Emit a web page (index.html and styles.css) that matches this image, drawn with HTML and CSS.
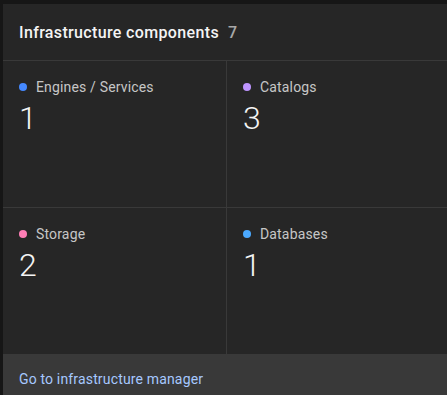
FILE: index.html
```html
<!DOCTYPE html>
<html>
<head>
  <title>Infrastructure components</title>
  <meta name="viewport" content="width=device-width, initial-scale=1.0">
  <link rel="stylesheet" href="styles.css">
</head>
<body>
  <div class="card">
    <div class="card-header">
      <h2 class="card-title">Infrastructure components</h2>
      <span class="card-count">7</span>
    </div>
    <div class="tiles">
      <div class="tile">
        <div class="tile-label"><span class="dot dot-engines"></span>Engines / Services</div>
        <div class="tile-value">1</div>
      </div>
      <div class="tile">
        <div class="tile-label"><span class="dot dot-catalogs"></span>Catalogs</div>
        <div class="tile-value">3</div>
      </div>
      <div class="tile">
        <div class="tile-label"><span class="dot dot-storage"></span>Storage</div>
        <div class="tile-value">2</div>
      </div>
      <div class="tile">
        <div class="tile-label"><span class="dot dot-databases"></span>Databases</div>
        <div class="tile-value">1</div>
      </div>
    </div>
    <div class="card-footer">
      <a class="footer-link" href="#">Go to infrastructure manager</a>
    </div>
  </div>
</body>
</html>
```

FILE: styles.css
```css
html, body {
  height: 100%;
}

body {
  margin: 0;
  padding: 4px 0 0 3px;
  background-color: #161616;
  font-family: Roboto, 'Noto Sans', sans-serif;
  color: #f4f4f4;
  overflow: hidden;
  box-sizing: border-box;
}

.card {
  width: 447px;
  height: 100%;
  background-color: #262626;
  display: flex;
  flex-direction: column;
}

.card-header {
  flex-shrink: 0;
  display: flex;
  align-items: center;
  gap: 9px;
  height: 56px;
  padding: 0 16px;
  border-bottom: 1px solid #393939;
}

.card-title {
  margin: 0;
  font-size: 16px;
  font-weight: 500;
  letter-spacing: 0.35px;
  color: #f4f4f4;
}

.card-count {
  font-size: 16px;
  font-weight: 500;
  color: #a8a8a8;
}

.tiles {
  flex-shrink: 0;
  display: grid;
  grid-template-columns: 223px 1fr;
  grid-auto-rows: 146px;
  gap: 1px;
  background-color: #393939;
}

.tile {
  background-color: #262626;
  padding: 16px;
}

.tile-label {
  display: flex;
  align-items: center;
  gap: 9px;
  font-size: 14px;
  line-height: 20px;
  color: #c6c6c6;
  letter-spacing: 0.16px;
}

.dot {
  width: 8px;
  height: 8px;
  border-radius: 50%;
}

.dot-engines { background-color: #4589ff; }
.dot-catalogs { background-color: #be95ff; }
.dot-storage { background-color: #ff7eb6; }
.dot-databases { background-color: #4ba9ff; }

.tile-value {
  margin-top: 3px;
  font-size: 32px;
  font-weight: 300;
  line-height: 36px;
  color: #f4f4f4;
}

.card-footer {
  flex: 1;
  background-color: #393939;
  padding: 15px 16px;
}

.footer-link {
  font-size: 14px;
  line-height: 20px;
  color: #a6c8ff;
  letter-spacing: 0.16px;
  text-decoration: none;
}
```
